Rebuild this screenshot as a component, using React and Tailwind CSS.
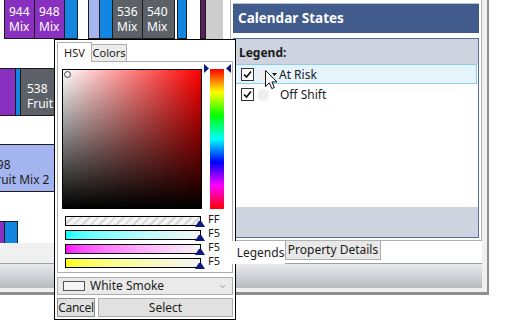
import React from 'react';
import { ChevronDown } from 'lucide-react';

function Bar({ className, lines }) {
  return (
    <div className={`h-full shrink-0 overflow-hidden whitespace-nowrap border-y border-r border-[#1c1c1c] pl-[4px] pt-[12px] text-[12px] leading-[15px] ${className}`}>
      {lines && lines.map((l) => <div key={l}>{l}</div>)}
    </div>
  );
}

function Check() {
  return (
    <div className="flex h-[13px] w-[13px] shrink-0 items-center justify-center border border-[#333] bg-white">
      <svg width="11" height="11" viewBox="0 0 11 11">
        <path d="M2 5.5 L4.5 8 L9 2.5" fill="none" stroke="#111" strokeWidth="1.7" />
      </svg>
    </div>
  );
}

function Slider({ bar, label }) {
  return (
    <div className="flex h-[14px] items-start">
      <div className={`relative ml-[3px] h-[10px] w-[136px] border border-black ${bar}`}>
        <svg className="absolute -bottom-[2px] right-[-5px]" width="10" height="7" viewBox="0 0 10 7">
          <path d="M0 7 L3.5 1.5 Q5 0 6.5 1.5 L10 7 Z" fill="#0c1a80" />
        </svg>
      </div>
      <span className="ml-[7px] -mt-[4px] text-[11px] leading-[14px] text-[#1b1b1b]">{label}</span>
    </div>
  );
}

export default function App() {
  return (
    <div className="relative h-[322px] w-[522px] overflow-hidden bg-white font-['Noto_Sans',sans-serif] text-[#1b1b1b]">

      {/* Window */}
      <div className="flex h-[295px] w-[489px] flex-col border-b-[3px] border-r-[2px] border-[#8f8f8f] bg-[#f0f0f0] pb-[4px] pr-[5px]">

        <div className="flex h-[264px] border-b border-[#9aa0a6]">

          {/* Gantt */}
          <div className="flex w-[230px] flex-col">
            <div className="flex h-[243px] bg-white">
              <div className="flex w-[206px] flex-col overflow-hidden">

                <div className="-mt-[9px] flex h-[48px] shrink-0">
                  <div className="w-[4px] shrink-0" />
                  <Bar className="w-[31px] border-l bg-[#8a30c0] text-white" lines={['944', 'Mix']} />
                  <Bar className="w-[30px] bg-[#8a30c0] text-white" lines={['948', 'Mix']} />
                  <Bar className="w-[13px] bg-[#1387e0]" />
                  <div className="w-[10px] shrink-0" />
                  <Bar className="w-[12px] border-l bg-[#a4b4ee]" />
                  <Bar className="w-[13px] bg-[#1387e0]" />
                  <Bar className="w-[30px] bg-[#5c6067] text-white" lines={['536', 'Mix']} />
                  <Bar className="w-[32px] bg-[#5c6067] text-white" lines={['540', 'Mix']} />
                  <div className="w-[2px] shrink-0" />
                  <Bar className="w-[10px] border-l bg-[#1387e0]" />
                  <div className="w-[13px] shrink-0" />
                  <Bar className="w-[6px] border-l bg-[#5c1d5e]" />
                </div>

                <div className="mt-[29px] flex h-[48px] shrink-0">
                  <Bar className="w-[16px] bg-[#8a30c0]" />
                  <Bar className="w-[4px] bg-[#1387e0]" />
                  <Bar className="w-[70px] bg-[#5c6067] pl-[6px] text-white" lines={['538', 'Fruit']} />
                </div>

                <div className="mt-[28px] flex h-[48px] shrink-0">
                  <div className="h-full w-[100px] shrink-0 overflow-hidden whitespace-nowrap border-y border-r border-[#1c1c1c] bg-[#a4b4ee] pt-[12px] text-[12px] leading-[15px] text-[#1b1b1b]">
                    <div className="-ml-[10px]">
                      <div>998</div>
                      <div>Fruit Mix 2</div>
                    </div>
                  </div>
                </div>

                <div className="mt-[29px] flex h-[48px] shrink-0">
                  <Bar className="w-[5px] bg-[#8a30c0]" />
                  <Bar className="w-[13px] bg-[#1387e0]" />
                </div>
              </div>
              <div className="w-[17px] shrink-0 bg-[#cdcdcd]" />
              <div className="w-[7px] shrink-0" />
            </div>
            <div className="h-[20px] bg-[#f0f0f0]" />
          </div>

          {/* Right panel */}
          <div className="flex w-[252px] flex-col bg-white">
            <div className="flex h-[241px] flex-col border-b border-l border-r border-[#b0b0b0] px-[2px] pt-[3px]">
              <div className="flex h-[30px] items-center border-t border-[#b8c2d2] bg-[#415b8c] pl-[5px] text-[13.5px] font-bold text-white">
                Calendar States
              </div>
              <div className="mt-[5px] flex h-[200px] flex-col border border-[#5a6e96]">
                <div className="flex h-[25px] items-center bg-[#cdd3df] pl-[5px] pt-[3px] text-[12px] font-bold">
                  Legend:
                </div>
                <div className="relative mx-px flex h-[20px] items-center border border-[#8ccbec] bg-[#e5f3fb] pl-[5px] pt-px text-[12px]">
                  <Check />
                  <div className="ml-[3px] h-[12px] w-[12px] rounded-full bg-[#efefef]" />
                  <svg className="ml-[3px]" width="5" height="3" viewBox="0 0 5 3"><path d="M0 0 H5 L2.5 3 Z" fill="#111" /></svg>
                  <span className="ml-[2px]">At Risk</span>
                  <svg className="absolute left-[29px] top-[5px]" width="13" height="20" viewBox="0 0 13 20">
                    <path d="M0.5 0.5 L0.5 16.5 L4.3 12.8 L6.8 18.6 L9.3 17.5 L6.9 11.9 L12 11.9 Z" fill="white" stroke="#111" strokeWidth="1" />
                  </svg>
                </div>
                <div className="mx-px flex h-[20px] items-center pl-[6px] pt-px text-[12px]">
                  <Check />
                  <div className="ml-[3px] h-[12px] w-[12px] rounded-full bg-[#efefef]" />
                  <span className="ml-[11px]">Off Shift</span>
                </div>
                <div className="flex-1" />
                <div className="h-[30px] bg-[#cdd3df]" />
              </div>
            </div>
            <div className="flex h-[22px] items-start">
              <div className="relative z-10 flex h-[23px] w-[55px] items-center justify-center bg-white pl-[6px] text-[12px]">Legends</div>
              <div className="flex h-[19px] w-[96px] items-center justify-center border border-t-0 border-[#acacac] bg-[#e8e8e8] text-[12px]">
                Property Details
              </div>
            </div>
          </div>
        </div>

        {/* Status bar */}
        <div className="h-[24px] bg-linear-to-b from-[#e9ebee] to-[#b6babf]" />
      </div>

      {/* Color picker popup */}
      <div className="absolute left-[54px] top-[39px] flex h-[281px] w-[182px] flex-col border border-black bg-white px-[2px] pb-[2px]">
        <div className="flex h-[21px] items-end">
          <div className="relative z-10 -mb-px flex h-[20px] w-[35px] justify-center border border-b-0 border-[#acacac] bg-white pt-[2px] text-[11px]">HSV</div>
          <div className="flex h-[17px] w-[35px] items-center justify-center border border-b-0 border-l-0 border-[#acacac] bg-[#ececec] text-[11px]">Colors</div>
        </div>

        <div className="flex h-[212px] flex-col border border-[#acacac] pl-[4px] pt-[7px]">
          <div className="flex">
            <div className="relative h-[140px] w-[140px] border border-black bg-[linear-gradient(to_bottom,transparent,#000),linear-gradient(to_right,#fff,#f00)]">
              <div className="absolute left-[1px] top-[1px] h-[7px] w-[7px] rounded-full border border-[#444]" />
            </div>
            <div className="relative ml-[8px] h-[140px] w-[14px] bg-[linear-gradient(to_bottom,#f00,#ff0,#0f0,#0ff,#00f,#f0f,#f00)]">
              <svg className="absolute -left-[6px] -top-[5px]" width="5" height="9" viewBox="0 0 5 9"><path d="M0 0 L5 4.5 L0 9 Z" fill="#0c1a80" /></svg>
              <svg className="absolute -right-[7px] -top-[5px]" width="5" height="9" viewBox="0 0 5 9"><path d="M5 0 L0 4.5 L5 9 Z" fill="#0c1a80" /></svg>
            </div>
          </div>
          <div className="mt-[7px] flex flex-col">
            <Slider bar="bg-[repeating-linear-gradient(135deg,#f4f4f4_0_4px,#d6d6d6_4px_6px)]" label="FF" />
            <Slider bar="bg-linear-to-r from-[#00ffff] to-[#f5f5f5]" label="F5" />
            <Slider bar="bg-linear-to-r from-[#ff00ff] to-[#f5f5f5]" label="F5" />
            <Slider bar="bg-linear-to-r from-[#ffff00] to-[#f5f5f5]" label="F5" />
          </div>
        </div>

        <div className="mt-[4px] flex h-[18px] items-center border border-[#acacac] bg-[#eaeaea] pl-[5px] text-[12px]">
          <div className="h-[10px] w-[22px] border border-[#555] bg-[#f5f5f5]" />
          <span className="ml-[5px]">White Smoke</span>
          <ChevronDown className="ml-auto mr-[5px] text-[#777]" size={9} strokeWidth={2} />
        </div>

        <div className="mt-[3px] flex h-[19px] gap-[3px] text-[12px]">
          <div className="flex w-[38px] items-center justify-center border border-[#8c8c8c] bg-[#e1e1e1] tracking-[-0.3px]">Cancel</div>
          <div className="flex flex-1 items-center justify-center border border-[#adadad] bg-[#e1e1e1]">Select</div>
        </div>
      </div>
    </div>
  );
}
